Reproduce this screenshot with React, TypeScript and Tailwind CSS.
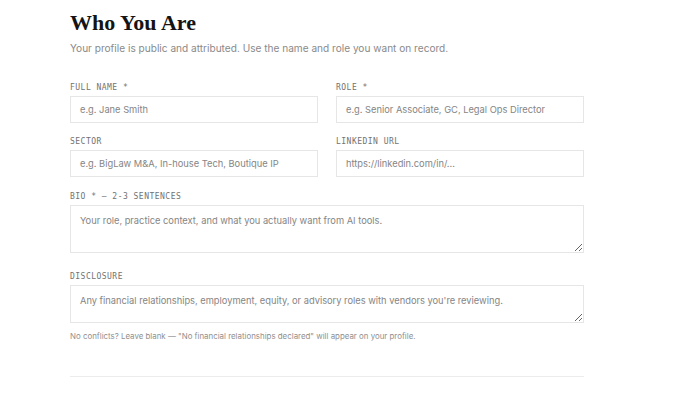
import { useState } from "react";

const labelCls =
  "block font-['DejaVu_Sans_Mono',monospace] text-[8px] leading-[12px] tracking-[0.06em] uppercase text-[#727272] mb-[2px]";
const inputCls =
  "block w-full h-[27px] border border-[#e6e6e6] bg-white px-[9px] font-['Inter',sans-serif] text-[9.3px] text-[#222] placeholder-[#858585] focus:outline-none";
const areaCls =
  "block w-full border border-[#e6e6e6] bg-white px-[9px] py-[7px] font-['Inter',sans-serif] text-[9.3px] leading-[15px] text-[#222] placeholder-[#858585] focus:outline-none resize-y";

export default function App() {
  const [form, setForm] = useState({ name: "", role: "", sector: "", linkedin: "", bio: "", disclosure: "" });

  return (
    <div className="min-h-screen bg-white">
      <div className="w-[514px] ml-[70px] pt-[9px]">
        {/* Header */}
        <h1 className="font-['Liberation_Serif',serif] font-bold text-[22px] leading-[28px] text-[#141414]">
          Who You Are
        </h1>
        <p className="mt-[3px] font-['Inter',sans-serif] text-[10.1px] leading-[16px] text-[#8a8a8a]">
          Your profile is public and attributed. Use the name and role you want on record.
        </p>

        {/* Fields */}
        <div className="mt-[26px] grid grid-cols-2 gap-x-[18px] gap-y-[13px]">
          <div>
            <label className={labelCls}>Full Name *</label>
            <input
              className={inputCls}
              placeholder="e.g. Jane Smith"
              value={form.name}
              onChange={(e) => setForm({ ...form, name: e.target.value })}
            />
          </div>
          <div>
            <label className={labelCls}>Role *</label>
            <input
              className={inputCls}
              placeholder="e.g. Senior Associate, GC, Legal Ops Director"
              value={form.role}
              onChange={(e) => setForm({ ...form, role: e.target.value })}
            />
          </div>
          <div>
            <label className={labelCls}>Sector</label>
            <input
              className={inputCls}
              placeholder="e.g. BigLaw M&A, In-house Tech, Boutique IP"
              value={form.sector}
              onChange={(e) => setForm({ ...form, sector: e.target.value })}
            />
          </div>
          <div>
            <label className={labelCls}>LinkedIn URL</label>
            <input
              className={inputCls}
              placeholder="https://linkedin.com/in/..."
              value={form.linkedin}
              onChange={(e) => setForm({ ...form, linkedin: e.target.value })}
            />
          </div>
        </div>

        {/* Bio */}
        <div className="mt-[14px]">
          <label className={labelCls}>Bio * — 2-3 sentences</label>
          <textarea
            className={`${areaCls} h-[48px]`}
            placeholder="Your role, practice context, and what you actually want from AI tools."
            value={form.bio}
            onChange={(e) => setForm({ ...form, bio: e.target.value })}
          />
        </div>

        {/* Disclosure */}
        <div className="mt-[18px]">
          <label className={labelCls}>Disclosure</label>
          <textarea
            className={`${areaCls} h-[38px]`}
            placeholder="Any financial relationships, employment, equity, or advisory roles with vendors you're reviewing."
            value={form.disclosure}
            onChange={(e) => setForm({ ...form, disclosure: e.target.value })}
          />
          <p className="mt-[6px] font-['Inter',sans-serif] text-[7.9px] leading-[14px] text-[#8f8f8f]">
            No conflicts? Leave blank — "No financial relationships declared" will appear on your profile.
          </p>
        </div>

        <div className="mt-[33px] border-t border-[#ececec]" />
      </div>
    </div>
  );
}
